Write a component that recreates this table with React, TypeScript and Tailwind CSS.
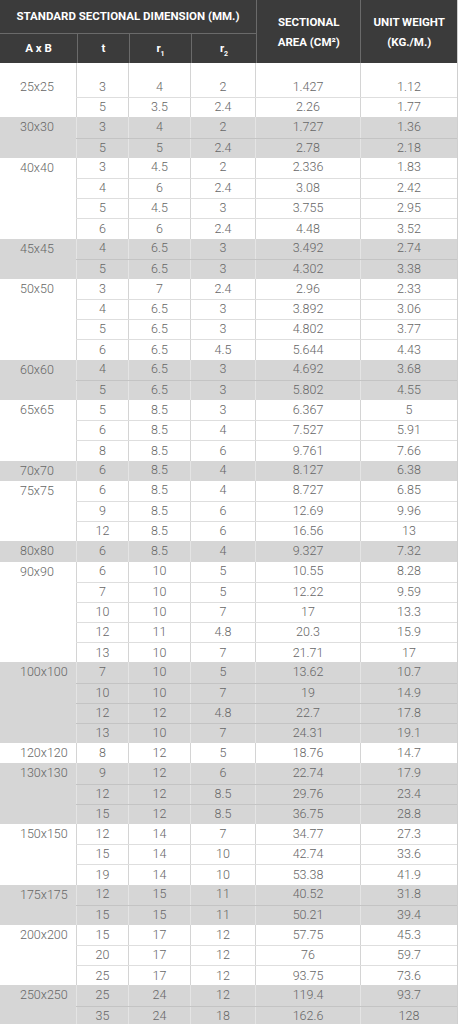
import React from "react";

type Row = [string, string, string, string, string];
type Group = { size: string; rows: Row[] };

const groups: Group[] = [
  { size: "25x25", rows: [["3", "4", "2", "1.427", "1.12"], ["5", "3.5", "2.4", "2.26", "1.77"]] },
  { size: "30x30", rows: [["3", "4", "2", "1.727", "1.36"], ["5", "5", "2.4", "2.78", "2.18"]] },
  {
    size: "40x40",
    rows: [
      ["3", "4.5", "2", "2.336", "1.83"],
      ["4", "6", "2.4", "3.08", "2.42"],
      ["5", "4.5", "3", "3.755", "2.95"],
      ["6", "6", "2.4", "4.48", "3.52"],
    ],
  },
  { size: "45x45", rows: [["4", "6.5", "3", "3.492", "2.74"], ["5", "6.5", "3", "4.302", "3.38"]] },
  {
    size: "50x50",
    rows: [
      ["3", "7", "2.4", "2.96", "2.33"],
      ["4", "6.5", "3", "3.892", "3.06"],
      ["5", "6.5", "3", "4.802", "3.77"],
      ["6", "6.5", "4.5", "5.644", "4.43"],
    ],
  },
  { size: "60x60", rows: [["4", "6.5", "3", "4.692", "3.68"], ["5", "6.5", "3", "5.802", "4.55"]] },
  {
    size: "65x65",
    rows: [
      ["5", "8.5", "3", "6.367", "5"],
      ["6", "8.5", "4", "7.527", "5.91"],
      ["8", "8.5", "6", "9.761", "7.66"],
    ],
  },
  { size: "70x70", rows: [["6", "8.5", "4", "8.127", "6.38"]] },
  {
    size: "75x75",
    rows: [
      ["6", "8.5", "4", "8.727", "6.85"],
      ["9", "8.5", "6", "12.69", "9.96"],
      ["12", "8.5", "6", "16.56", "13"],
    ],
  },
  { size: "80x80", rows: [["6", "8.5", "4", "9.327", "7.32"]] },
  {
    size: "90x90",
    rows: [
      ["6", "10", "5", "10.55", "8.28"],
      ["7", "10", "5", "12.22", "9.59"],
      ["10", "10", "7", "17", "13.3"],
      ["12", "11", "4.8", "20.3", "15.9"],
      ["13", "10", "7", "21.71", "17"],
    ],
  },
  {
    size: "100x100",
    rows: [
      ["7", "10", "5", "13.62", "10.7"],
      ["10", "10", "7", "19", "14.9"],
      ["12", "12", "4.8", "22.7", "17.8"],
      ["13", "10", "7", "24.31", "19.1"],
    ],
  },
  { size: "120x120", rows: [["8", "12", "5", "18.76", "14.7"]] },
  {
    size: "130x130",
    rows: [
      ["9", "12", "6", "22.74", "17.9"],
      ["12", "12", "8.5", "29.76", "23.4"],
      ["15", "12", "8.5", "36.75", "28.8"],
    ],
  },
  {
    size: "150x150",
    rows: [
      ["12", "14", "7", "34.77", "27.3"],
      ["15", "14", "10", "42.74", "33.6"],
      ["19", "14", "10", "53.38", "41.9"],
    ],
  },
  { size: "175x175", rows: [["12", "15", "11", "40.52", "31.8"], ["15", "15", "11", "50.21", "39.4"]] },
  {
    size: "200x200",
    rows: [
      ["15", "17", "12", "57.75", "45.3"],
      ["20", "17", "12", "76", "59.7"],
      ["25", "17", "12", "93.75", "73.6"],
    ],
  },
  { size: "250x250", rows: [["25", "24", "12", "119.4", "93.7"], ["35", "24", "18", "162.6", "128"]] },
];

const widths = ["w-[52px]", "w-[62px]", "w-[65px]", "w-[105px]", "w-[97px]"];

export default function App() {
  return (
    <div
      className="w-[461px] bg-white"
      style={{ fontFamily: "Roboto, 'Liberation Sans', sans-serif" }}
    >
      <div className="w-[458px] border-r border-[#cfcfcf]">
        {/* Header */}
        <div className="flex bg-[#3b3b3b] text-white font-bold text-[11.5px] leading-[15px]">
          <div className="w-[256px] flex flex-col">
            <div className="h-[34px] flex items-center justify-center border-b border-[#6a6a6a]">
              STANDARD SECTIONAL DIMENSION (MM.)
            </div>
            <div className="h-[29px] flex">
              <div className="w-[77px] flex items-center justify-center">A x B</div>
              <div className="w-[52px] flex items-center justify-center border-l border-[#6a6a6a]">t</div>
              <div className="w-[62px] flex items-center justify-center border-l border-[#6a6a6a]">
                <span>
                  r<sub className="text-[7px] align-[-2px]">1</sub>
                </span>
              </div>
              <div className="w-[65px] flex items-center justify-center border-l border-[#6a6a6a]">
                <span>
                  r<sub className="text-[7px] align-[-2px]">2</sub>
                </span>
              </div>
            </div>
          </div>
          <div className="w-[105px] h-[63px] flex flex-col items-center justify-center text-center border-l border-[#6a6a6a] leading-[20px]">
            <div>SECTIONAL</div>
            <div>AREA (CM²)</div>
          </div>
          <div className="w-[97px] h-[63px] flex flex-col items-center justify-center text-center border-l border-[#6a6a6a] leading-[20px]">
            <div>UNIT WEIGHT</div>
            <div>(KG./M.)</div>
          </div>
        </div>

        {/* Body */}
        <div className="text-[12.5px] font-light text-[#666666]">
          {groups.map((g, gi) => {
            const gray = gi % 2 === 1;
            return (
              <div key={g.size} className={`flex ${gray ? "bg-[#d6d6d6]" : "bg-white"}`}>
                <div
                  className={`w-[77px] pl-[20px] leading-[20.2px] ${gi === 0 ? "pt-[14px]" : ""}`}
                >
                  {g.size}
                </div>
                <div className="flex flex-col">
                  {g.rows.map((r, ri) => (
                    <div
                      key={ri}
                      className={`flex ${ri > 0 ? (gray ? "border-t border-[#c4c4c4]" : "border-t border-[#dedede]") : ""} ${
                        gi === 0 && ri === 0 ? "h-[34.2px] items-end" : "h-[20.2px] items-center"
                      }`}
                    >
                      {r.map((v, ci) => (
                        <div
                          key={ci}
                          className={`${widths[ci]} h-full flex items-center justify-center border-l ${
                            gray ? "border-[#e4e4e4]" : "border-[#d4d4d4]"
                          } ${gi === 0 && ri === 0 ? "pt-[14px]" : ""}`}
                        >
                          {v}
                        </div>
                      ))}
                    </div>
                  ))}
                </div>
              </div>
            );
          })}
        </div>
      </div>
    </div>
  );
}
